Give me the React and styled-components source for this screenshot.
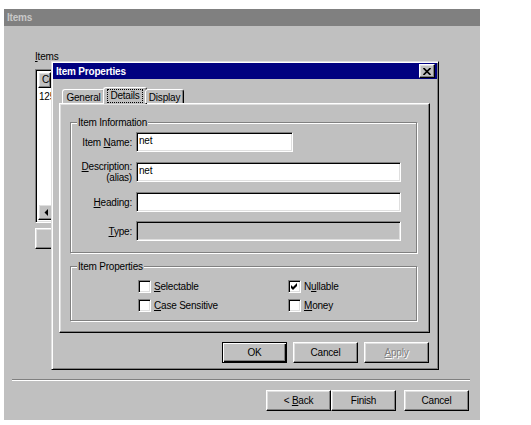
import React from "react";
import styled, { createGlobalStyle, css } from "styled-components";

const GlobalStyle = createGlobalStyle`
  body {
    margin: 0;
    background: #fff;
    font-family: "Liberation Sans", Arial, sans-serif;
    font-size: 10px;
    letter-spacing: -0.2px;
    color: #000;
  }
  * { box-sizing: border-box; }
`;

const raised = css`
  border: 1px solid;
  border-color: #fff #000 #000 #fff;
  box-shadow: inset -1px -1px 0 #808080, inset 1px 1px 0 #dfdfdf;
`;

const sunken = css`
  border: 1px solid;
  border-color: #808080 #fff #fff #808080;
  box-shadow: inset 1px 1px 0 #000, inset -1px -1px 0 #dfdfdf;
`;

const Desktop = styled.div`
  position: relative;
  width: 531px;
  height: 425px;
  overflow: hidden;
  background: #fff;
`;

const Window = styled.div`
  position: absolute;
  left: ${(p) => p.$left}px;
  top: ${(p) => p.$top}px;
  width: ${(p) => p.$width}px;
  height: ${(p) => p.$height}px;
  display: flex;
  flex-direction: column;
  background: #c0c0c0;
  ${(p) =>
    p.$framed &&
    css`
      padding: 1px;
      border: 1px solid;
      border-color: #dfdfdf #000 #000 #dfdfdf;
      box-shadow: inset 1px 1px 0 #fff, inset -1px -1px 0 #808080;
    `}
`;

const TitleBar = styled.div`
  flex: none;
  height: ${(p) => p.$h}px;
  display: flex;
  align-items: center;
  justify-content: space-between;
  padding: 0 2px 0 3px;
  background: ${(p) => (p.$active ? "#000080" : "#808080")};
  color: ${(p) => (p.$active ? "#fff" : "#c8c8c8")};
  font-weight: bold;
  font-size: 10px;
`;

const CloseBox = styled.span`
  width: 16px;
  height: 14px;
  display: flex;
  align-items: center;
  justify-content: center;
  background: #c0c0c0;
  ${raised}
`;

/* wizard page */

const WizardBody = styled.div`
  flex: 1;
  display: flex;
  flex-direction: column;
  padding: 0 10px 9px 8px;
`;

const ListArea = styled.div`
  display: flex;
  flex-direction: column;
  align-items: flex-start;
  padding: 24px 0 0 23px;
`;

const FieldCaption = styled.div`
  line-height: 13px;
  margin-bottom: 6px;
`;

const ListBox = styled.div`
  width: 200px;
  height: 154px;
  display: flex;
  flex-direction: column;
  background: #fff;
  padding: 2px;
  ${sunken}
`;

const HeaderRow = styled.div`
  display: flex;
`;

const HeaderCell = styled.div`
  width: ${(p) => p.$w}px;
  height: 16px;
  padding-left: 3px;
  line-height: 14px;
  overflow: hidden;
  white-space: nowrap;
  background: #c0c0c0;
  ${raised}
`;

const ListRow = styled.div`
  line-height: 13px;
  padding: 2px 0 0 1px;
  flex: 1;
`;

const HScroll = styled.div`
  height: 16px;
  display: flex;
  background: repeating-conic-gradient(#c0c0c0 0 25%, #fff 0 50%) 0 0 / 2px 2px;
`;

const ScrollButton = styled.div`
  width: 16px;
  height: 16px;
  display: flex;
  align-items: center;
  justify-content: center;
  background: #c0c0c0;
  ${raised}
`;

const Footer = styled.div`
  margin-top: auto;
  display: flex;
  flex-direction: column;
`;

const Separator = styled.div`
  height: 2px;
  border-top: 1px solid #808080;
  border-bottom: 1px solid #fff;
  margin-bottom: 9px;
`;

const ButtonRow = styled.div`
  display: flex;
  justify-content: flex-end;
  gap: ${(p) => p.$gap || 0}px;
  padding-right: 1px;
  margin-top: ${(p) => p.$top || 0}px;
`;

const Pair = styled.div`
  display: flex;
`;

const Button = styled.button`
  width: ${(p) => p.$w || 65}px;
  height: 21px;
  padding: 0;
  margin-top: ${(p) => p.$top || 0}px;
  font: inherit;
  letter-spacing: inherit;
  background: #c0c0c0;
  color: #000;
  ${raised}
  ${(p) =>
    p.$default &&
    css`
      border-color: #000;
      box-shadow: inset 1px 1px 0 #fff, inset -1px -1px 0 #000,
        inset -2px -2px 0 #808080;
    `}
  &:disabled {
    color: #808080;
    text-shadow: 1px 1px 0 #fff;
  }
`;

/* property sheet */

const DialogBody = styled.div`
  flex: 1;
  display: flex;
  flex-direction: column;
  padding: 8px 7px 5px 6px;
`;

const TabStrip = styled.div`
  height: 16px;
  display: flex;
  align-items: flex-end;
  padding-left: 3px;
  position: relative;
  z-index: 1;
`;

const Tab = styled.div`
  width: ${(p) => p.$w}px;
  height: ${(p) => (p.$active ? 17 : 14)}px;
  margin: 0 ${(p) => (p.$active ? -2 : 0)}px ${(p) => (p.$active ? -1 : 0)}px;
  display: flex;
  align-items: ${(p) => (p.$active ? "flex-start" : "center")};
  justify-content: center;
  padding-top: ${(p) => (p.$active ? 2 : 1)}px;
  background: #c0c0c0;
  border-top: 1px solid #fff;
  border-left: 1px solid #fff;
  border-right: 1px solid #000;
  border-radius: 3px 3px 0 0;
  box-shadow: inset -1px 0 0 #808080;
`;

const FocusRing = styled.span`
  outline: 1px dotted #000;
  outline-offset: 0;
  padding: 0 2px;
  line-height: 12px;
`;

const Panel = styled.div`
  height: 230px;
  display: flex;
  flex-direction: column;
  padding: 18px 12px 9px 10px;
  ${raised}
`;

const Group = styled.div`
  height: ${(p) => p.$h}px;
  margin-bottom: ${(p) => p.$gap || 0}px;
  border: 1px solid #808080;
  box-shadow: inset 1px 1px 0 #fff, 1px 1px 0 #fff;
  display: flex;
  flex-direction: column;
`;

const GroupCaption = styled.div`
  align-self: flex-start;
  margin: -7px 0 0 6px;
  padding: 0 1px;
  line-height: 13px;
  background: #c0c0c0;
`;

const FieldGrid = styled.div`
  display: grid;
  grid-template-columns: 61px 1fr;
  column-gap: 4px;
  row-gap: 9px;
  padding-top: 3px;
  align-items: center;
`;

const Label = styled.label`
  text-align: right;
  line-height: 11px;
`;

const TextField = styled.input`
  width: ${(p) => p.$w}px;
  height: 20px;
  padding: 0 2px 3px;
  font: inherit;
  letter-spacing: inherit;
  color: #000;
  background: ${(p) => (p.disabled ? "#c0c0c0" : "#fff")};
  outline: none;
  ${sunken}
`;

const CheckGrid = styled.div`
  display: grid;
  grid-template-columns: 150px 1fr;
  row-gap: 6px;
  padding: 7px 0 0 67px;
`;

const CheckItem = styled.label`
  display: flex;
  align-items: center;
  gap: 3px;
  height: 13px;
`;

const Box = styled.span`
  width: 13px;
  height: 13px;
  display: flex;
  align-items: center;
  justify-content: center;
  background: #fff;
  ${sunken}
`;

const u = (s) => <u>{s}</u>;

const Checkbox = ({ checked, children }) => (
  <CheckItem>
    <Box>
      {checked && (
        <svg width="7" height="7" viewBox="0 0 7 7">
          <path d="M0 2 L2 4 L6 0 L6 3 L2 7 L0 5 Z" fill="#000" />
        </svg>
      )}
    </Box>
    <span>{children}</span>
  </CheckItem>
);

const fields = [
  { label: <>Item {u("N")}ame:</>, value: "net", w: 157 },
  {
    label: (
      <>
        {u("D")}escription:
        <br />
        (alias)
      </>
    ),
    value: "net",
    w: 265,
  },
  { label: <>{u("H")}eading:</>, value: "", w: 265 },
  { label: <>{u("T")}ype:</>, value: "", w: 265, disabled: true },
];

export default function App() {
  return (
    <Desktop>
      <GlobalStyle />
      <Window $left={4} $top={9} $width={476} $height={411}>
        <TitleBar $h={17}>Items</TitleBar>
        <WizardBody>
          <ListArea>
            <FieldCaption>{u("I")}tems</FieldCaption>
            <ListBox>
              <HeaderRow>
                <HeaderCell $w={13}>Co</HeaderCell>
                <HeaderCell $w={60} />
              </HeaderRow>
              <ListRow>125</ListRow>
              <HScroll>
                <ScrollButton>
                  <svg width="4" height="7" viewBox="0 0 4 7">
                    <path d="M4 0 L0.5 3.5 L4 7 Z" fill="#000" />
                  </svg>
                </ScrollButton>
              </HScroll>
            </ListBox>
            <Button $w={90} $top={5} />
          </ListArea>
          <Footer>
            <Separator />
            <ButtonRow $gap={8}>
              <Pair>
                <Button>&lt; {u("B")}ack</Button>
                <Button>Finish</Button>
              </Pair>
              <Button>Cancel</Button>
            </ButtonRow>
          </Footer>
        </WizardBody>
      </Window>

      <Window $left={51} $top={61} $width={388} $height={309} $framed>
        <TitleBar $h={16} $active>
          <span>Item Properties</span>
          <CloseBox>
            <svg width="8" height="7" viewBox="0 0 8 7">
              <path d="M0.5 0 L7.5 7 M7.5 0 L0.5 7" stroke="#000" strokeWidth="1.6" />
            </svg>
          </CloseBox>
        </TitleBar>
        <DialogBody>
          <TabStrip>
            <Tab $w={43}>General</Tab>
            <Tab $w={44} $active>
              <FocusRing>Details</FocusRing>
            </Tab>
            <Tab $w={39}>Display</Tab>
          </TabStrip>
          <Panel>
            <Group $h={131} $gap={13}>
              <GroupCaption>Item Information</GroupCaption>
              <FieldGrid>
                {fields.map((f, i) => (
                  <React.Fragment key={i}>
                    <Label>{f.label}</Label>
                    <TextField
                      $w={f.w}
                      defaultValue={f.value}
                      disabled={f.disabled}
                      readOnly
                    />
                  </React.Fragment>
                ))}
              </FieldGrid>
            </Group>
            <Group $h={55}>
              <GroupCaption>Item Properties</GroupCaption>
              <CheckGrid>
                <Checkbox>{u("S")}electable</Checkbox>
                <Checkbox checked>N{u("u")}llable</Checkbox>
                <Checkbox>{u("C")}ase Sensitive</Checkbox>
                <Checkbox>{u("M")}oney</Checkbox>
              </CheckGrid>
            </Group>
          </Panel>
          <ButtonRow $gap={6} $top={9}>
            <Button $default>OK</Button>
            <Button>Cancel</Button>
            <Button disabled>{u("A")}pply</Button>
          </ButtonRow>
        </DialogBody>
      </Window>
    </Desktop>
  );
}
